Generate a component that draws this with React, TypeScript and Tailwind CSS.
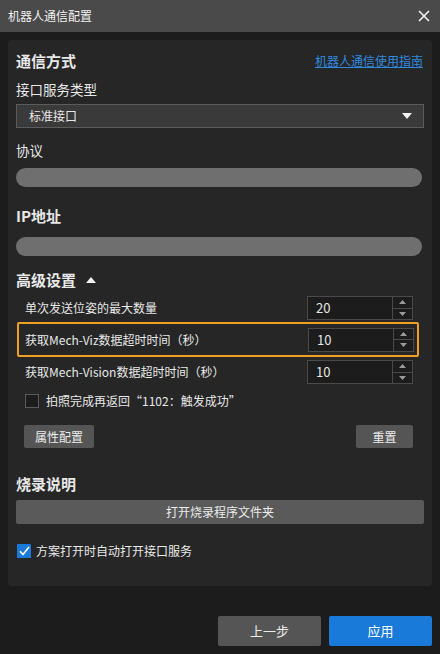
import { useState } from 'react';

function SpinBox({ value }: { value: string }) {
  return (
    <div className="flex h-6 w-[106px] border border-[#4a4a4a] bg-[#1c1c1c]">
      <div className="flex flex-1 items-center pl-2 text-[13px] text-[#e6e6e6]">{value}</div>
      <div className="flex w-5 flex-col border-l border-[#4a4a4a]">
        <div className="flex flex-1 items-center justify-center border-b border-[#4a4a4a]">
          <svg width="7" height="4" viewBox="0 0 7 4"><path d="M0 4L3.5 0L7 4Z" fill="#9a9a9a" /></svg>
        </div>
        <div className="flex flex-1 items-center justify-center">
          <svg width="7" height="4" viewBox="0 0 7 4"><path d="M0 0L7 0L3.5 4Z" fill="#9a9a9a" /></svg>
        </div>
      </div>
    </div>
  );
}

export default function App() {
  const [autoOpen, setAutoOpen] = useState(true);
  const [returnAfter, setReturnAfter] = useState(false);

  return (
    <div
      className="flex h-[654px] w-[440px] flex-col bg-[#1c1c1c] text-[#e8e8e8]"
      style={{ fontFamily: '"Noto Sans CJK SC", "Noto Sans", sans-serif' }}
    >
      <div className="flex h-8 items-center justify-between bg-[#4a4a4a] pl-2 pr-2">
        <span className="text-[12px] text-[#f0f0f0]">机器人通信配置</span>
        <svg width="12" height="12" viewBox="0 0 12 12" className="mr-[2px]">
          <path d="M1 1L11 11M11 1L1 11" stroke="#f2f2f2" strokeWidth="1.6" />
        </svg>
      </div>

      <div className="mx-2 mt-2 flex h-[546px] flex-col rounded bg-[#262626] px-2">
        <div className="mt-[10px] flex items-center justify-between">
          <span className="text-[15px] font-bold">通信方式</span>
          <a className="mr-[1px] text-[12px] text-[#2f8ae0] underline">机器人通信使用指南</a>
        </div>
        <div className="mt-[6px] text-[13.5px]">接口服务类型</div>
        <div className="mt-[5px] flex h-6 items-center justify-between border border-[#5c5c5c] bg-[#3a3a3a] pl-3 pr-[11px]">
          <span className="text-[12px]">标准接口</span>
          <svg width="10" height="6" viewBox="0 0 10 6"><path d="M0 0L10 0L5 6Z" fill="#f2f2f2" /></svg>
        </div>

        <div className="mt-[12px] text-[13.5px]">协议</div>
        <div className="mt-[8px] h-[19px] w-[406px] rounded-full bg-[#6f6f6f]" />

        <div className="mt-[18px] text-[15px] font-bold">IP地址</div>
        <div className="mt-[9px] h-[19px] w-[406px] rounded-full bg-[#6f6f6f]" />

        <div className="mt-[13px] flex items-center gap-[10px]">
          <span className="text-[15px] font-bold">高级设置</span>
          <svg width="10" height="6" viewBox="0 0 10 6"><path d="M0 6L5 0L10 6Z" fill="#f2f2f2" /></svg>
        </div>

        <div className="mt-[1px] flex h-8 items-center justify-between pl-[9px] pr-[11px]">
          <span className="text-[12px]">单次发送位姿的最大数量</span>
          <SpinBox value="20" />
        </div>
        <div className="-mb-[1px] -mt-[2px] ml-[1px] mr-[5px] flex h-[35px] items-center justify-between rounded-[2px] border-2 border-[#f0a020] pl-[6px] pr-[3px]">
          <span className="text-[12px]">获取Mech-Viz数据超时时间（秒）</span>
          <SpinBox value="10" />
        </div>
        <div className="flex h-8 items-center justify-between pl-[9px] pr-[11px]">
          <span className="text-[12px]">获取Mech-Vision数据超时时间（秒）</span>
          <SpinBox value="10" />
        </div>

        <label className="mt-[4px] flex items-center gap-[7px] pl-[9px]">
          <span
            onClick={() => setReturnAfter(!returnAfter)}
            className="h-[14px] w-[14px] border border-[#5a5a5a] bg-[#1c1c1c]"
          />
          <span className="text-[12px]">拍照完成再返回“1102：触发成功”</span>
        </label>

        <div className="mt-[15px] flex justify-between pl-2 pr-[11px]">
          <button className="h-[23px] w-[70px] rounded-[2px] bg-[#555555] text-[12px] text-[#ececec]">属性配置</button>
          <button className="h-[23px] w-[57px] rounded-[2px] bg-[#555555] text-[12px] text-[#ececec]">重置</button>
        </div>

        <div className="mt-[25px] text-[15px] font-bold">烧录说明</div>
        <button className="mt-[4.5px] h-6 w-full rounded-[2px] bg-[#5a5a5a] text-[12px] text-[#ececec]">打开烧录程序文件夹</button>

        <label className="mt-[18px] flex items-center gap-[5px] pl-[1px]">
          <span
            onClick={() => setAutoOpen(!autoOpen)}
            className="flex h-[14px] w-[14px] items-center justify-center rounded-[1px] bg-[#1a7ad9]"
          >
            {autoOpen && (
              <svg width="11" height="10" viewBox="0 0 11 10">
                <path d="M1 5.2L4 8.5L10 1" stroke="#ffffff" strokeWidth="1.6" fill="none" />
              </svg>
            )}
          </span>
          <span className="text-[12px]">方案打开时自动打开接口服务</span>
        </label>
      </div>

      <div className="mt-[30px] flex justify-end gap-2 pr-2">
        <button className="h-[30px] w-[103px] rounded-[2px] bg-[#555555] text-[13px] text-[#ececec]">上一步</button>
        <button className="h-[30px] w-[103px] rounded-[2px] bg-[#1a7ad9] text-[13px] text-white">应用</button>
      </div>
    </div>
  );
}
